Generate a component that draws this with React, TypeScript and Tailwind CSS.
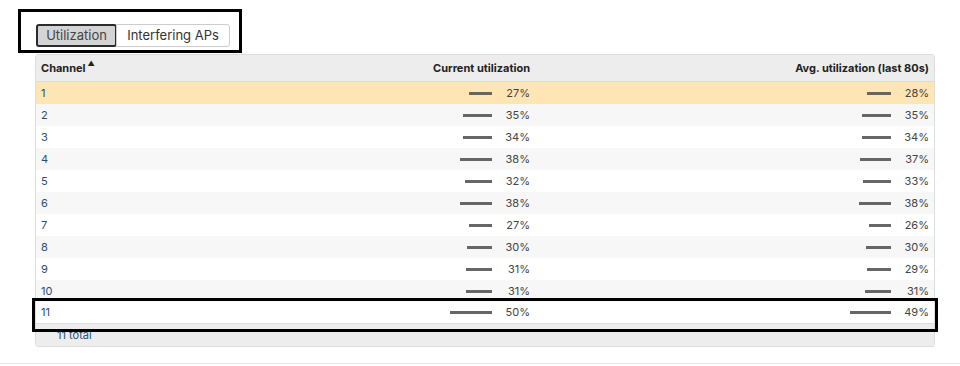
import React from "react";

type Row = { ch: number; cur: number; avg: number };

const rows: Row[] = [
  { ch: 1, cur: 27, avg: 28 },
  { ch: 2, cur: 35, avg: 35 },
  { ch: 3, cur: 34, avg: 34 },
  { ch: 4, cur: 38, avg: 37 },
  { ch: 5, cur: 32, avg: 33 },
  { ch: 6, cur: 38, avg: 38 },
  { ch: 7, cur: 27, avg: 26 },
  { ch: 8, cur: 30, avg: 30 },
  { ch: 9, cur: 31, avg: 29 },
  { ch: 10, cur: 31, avg: 31 },
  { ch: 11, cur: 50, avg: 49 },
];

function Usage({ pct }: { pct: number }) {
  return (
    <div className="flex items-center justify-end">
      <div className="h-[3px] bg-[#666]" style={{ width: Math.round(pct * 0.84) }} />
      <span className="w-[38px] text-right">{pct}%</span>
    </div>
  );
}

export default function App() {
  return (
    <div className="relative h-[366px] w-[960px] bg-white font-['Inter',sans-serif] text-[11px] text-[#444]">
      <div className="pl-[36px] pt-[24px]">
        <div className="flex h-[23px] w-[194px] text-[13px]">
          <button className="h-full w-[81px] rounded-[3px] border-2 border-[#2b2b2b] bg-[#d4d4d4] text-[#444]">
            Utilization
          </button>
          <button className="-ml-px h-full flex-1 rounded-r-[3px] border border-[#ccc] bg-white text-[#333]">
            Interfering APs
          </button>
        </div>
      </div>

      <div className="ml-[35px] mt-[7px] w-[900px] overflow-hidden rounded-[3px] border border-[#ddd]">
        <div className="grid h-[27px] grid-cols-[101px_388px_1fr] items-center border-b border-[#ddd] bg-[#ededed] pl-[5px] pr-[5px] font-bold text-[#222]">
          <div className="flex items-start">
            Channel<span className="ml-[2px] text-[7px] leading-none">▲</span>
          </div>
          <div className="text-right">Current utilization</div>
          <div className="text-right">Avg. utilization (last 80s)</div>
        </div>
        {rows.map((r, i) => (
          <div
            key={r.ch}
            className={
              "grid h-[22px] grid-cols-[101px_388px_1fr] items-center pl-[5px] pr-[5px] " +
              (i === 0 ? "bg-[#fee6b4]" : i % 2 === 1 ? "bg-[#f7f7f7]" : "bg-white") +
              (i === rows.length - 1 ? " border-b border-[#ddd]" : "")
            }
          >
            <div className="text-[#2a4e72]">{r.ch}</div>
            <Usage pct={r.cur} />
            <Usage pct={r.avg} />
          </div>
        ))}
        <div className="flex h-[22px] items-center bg-[#ededed] pl-[21px] text-[#2a4e72]">11 total</div>
      </div>

      <div className="absolute bottom-[2px] left-0 right-0 h-px bg-[#e6e6e6]" />

      <div className="pointer-events-none absolute left-[18px] top-[9px] h-[44px] w-[224px] border-[3px] border-black" />
      <div className="pointer-events-none absolute left-[32px] top-[298px] h-[34px] w-[906px] border-[3px] border-black" />
    </div>
  );
}
